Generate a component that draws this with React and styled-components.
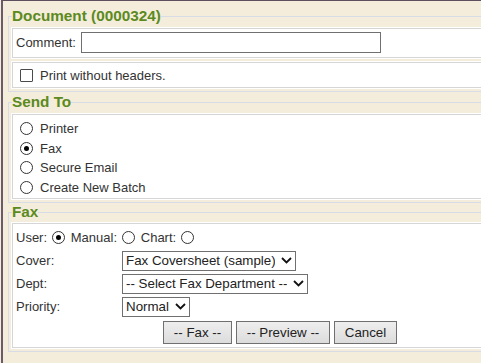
import React from 'react';
import styled, { createGlobalStyle } from 'styled-components';

const GlobalStyle = createGlobalStyle`
  html, body {
    margin: 0;
    background: #f5eddc;
    overflow: hidden;
  }
  body {
    font-family: "Liberation Sans", Arial, sans-serif;
    font-size: 13px;
    color: #333;
  }
`;

const Frame = styled.div`
  box-sizing: border-box;
  width: 481px;
  min-height: 100vh;
  overflow: hidden;
  margin-left: 1px;
  border-left: 2px solid #6a5a6a;
  border-top: 1px solid #5e4e5e;
  padding: 6px 0 0 5px;
`;

const Section = styled.fieldset`
  margin: ${(p) => p.$mt || 0}px -40px 0 0;
  padding: ${(p) => p.$pt || 3}px 3px 3px;
  border: 1px solid #d8dce6;
  min-width: 0;
`;

const Legend = styled.legend`
  padding: 0;
  font: bold 15.3px/18px "Liberation Sans", Arial, sans-serif;
  color: #5b8a1e;
`;

const Panel = styled.div`
  background: #fff;
  border: 1px solid #d6d6d6;
  box-shadow: 0 0 0 1px #fff;
  & + & {
    margin-top: 4px;
  }
`;

const CommentRow = styled.div`
  display: flex;
  align-items: center;
  gap: 5px;
  padding: 3px 0 4px 3px;
`;

const TextInput = styled.input`
  box-sizing: border-box;
  width: 300px;
  height: 21px;
  margin: 0;
  border: 1px solid #707070;
  padding: 1px 3px;
  font: 13.33px "Liberation Sans", Arial, sans-serif;
`;

const CheckRow = styled.label`
  display: flex;
  align-items: center;
  height: 16px;
  padding: 4px 0 4px 0;
`;

const Checkbox = styled.input.attrs({ type: 'checkbox' })`
  appearance: none;
  box-sizing: border-box;
  width: 13px;
  height: 13px;
  margin: 0 7px;
  border: 1px solid #4a4a4a;
  border-radius: 1px;
  background: #fff;
`;

const Radio = styled.input.attrs({ type: 'radio' })`
  appearance: none;
  box-sizing: border-box;
  position: relative;
  flex-shrink: 0;
  width: 13px;
  height: 13px;
  margin: ${(p) => (p.$inline ? '0 2.5px 0 1px' : '0 7px')};
  vertical-align: ${(p) => (p.$inline ? '-2px' : 'baseline')};
  border: 1px solid #333;
  border-radius: 50%;
  background: #fff;
  &:checked::after {
    content: '';
    position: absolute;
    inset: 3px;
    border-radius: 50%;
    background: #000;
  }
`;

const OptionList = styled.div`
  padding: 4px 0 1px;
`;

const Option = styled.label`
  display: flex;
  align-items: center;
  height: 19.5px;
`;

const FaxBody = styled.div`
  padding: 2px 0 3px 3px;
`;

const FormGrid = styled.div`
  display: grid;
  grid-template-columns: 106px 1fr;
  grid-auto-rows: 23px;
  align-items: center;
`;

const UserRow = styled.div`
  grid-column: 1 / -1;
`;

const SelectWrap = styled.span`
  position: relative;
  display: inline-flex;
  width: ${(p) => p.$w}px;
`;

const Select = styled.select`
  appearance: none;
  box-sizing: border-box;
  width: 100%;
  height: 20px;
  margin: 0;
  padding: 0 20px 0 3px;
  border: 1px solid #707070;
  border-radius: 0;
  background: #fff;
  color: #222;
  font: 13.33px "Liberation Sans", Arial, sans-serif;
`;

const Chevron = styled.svg`
  position: absolute;
  right: 4px;
  top: 6px;
  pointer-events: none;
`;

const ButtonRow = styled.div`
  display: flex;
  gap: 4px;
  margin: 3px 0 0 147px;
`;

const Button = styled.button`
  box-sizing: border-box;
  width: ${(p) => p.$w}px;
  height: 23px;
  padding: 0;
  border: 1px solid #707070;
  background: linear-gradient(#eeeeee, #dcdcdc);
  color: #222;
  font: 13.33px "Liberation Sans", Arial, sans-serif;
`;

function Dropdown({ w, children }) {
  return (
    <SelectWrap $w={w}>
      <Select>{children}</Select>
      <Chevron width="11" height="7" viewBox="0 0 11 7">
        <polyline points="1,1 5.5,5.5 10,1" fill="none" stroke="#111" strokeWidth="1.8" />
      </Chevron>
    </SelectWrap>
  );
}

export default function App() {
  return (
    <>
      <GlobalStyle />
      <Frame>
        <Section>
          <Legend>Document (0000324)</Legend>
          <Panel>
            <CommentRow>
              <span>Comment:</span>
              <TextInput type="text" />
            </CommentRow>
          </Panel>
          <Panel>
            <CheckRow>
              <Checkbox />
              Print without headers.
            </CheckRow>
          </Panel>
        </Section>

        <Section $mt={1}>
          <Legend>Send To</Legend>
          <Panel>
            <OptionList>
              <Option><Radio name="send" />Printer</Option>
              <Option><Radio name="send" defaultChecked />Fax</Option>
              <Option><Radio name="send" />Secure Email</Option>
              <Option><Radio name="send" />Create New Batch</Option>
            </OptionList>
          </Panel>
        </Section>

        <Section $pt={2}>
          <Legend>Fax</Legend>
          <Panel>
            <FaxBody>
              <FormGrid>
                <UserRow>
                  User: <Radio $inline name="who" defaultChecked /> Manual: <Radio $inline name="who" /> Chart: <Radio $inline name="who" />
                </UserRow>
                <span>Cover:</span>
                <Dropdown w={174}>
                  <option>Fax Coversheet (sample)</option>
                </Dropdown>
                <span>Dept:</span>
                <Dropdown w={186}>
                  <option>-- Select Fax Department --</option>
                </Dropdown>
                <span>Priority:</span>
                <Dropdown w={68}>
                  <option>Normal</option>
                </Dropdown>
              </FormGrid>
              <ButtonRow>
                <Button $w={69}>-- Fax --</Button>
                <Button $w={94}>-- Preview --</Button>
                <Button $w={63}>Cancel</Button>
              </ButtonRow>
            </FaxBody>
          </Panel>
        </Section>
      </Frame>
    </>
  );
}
